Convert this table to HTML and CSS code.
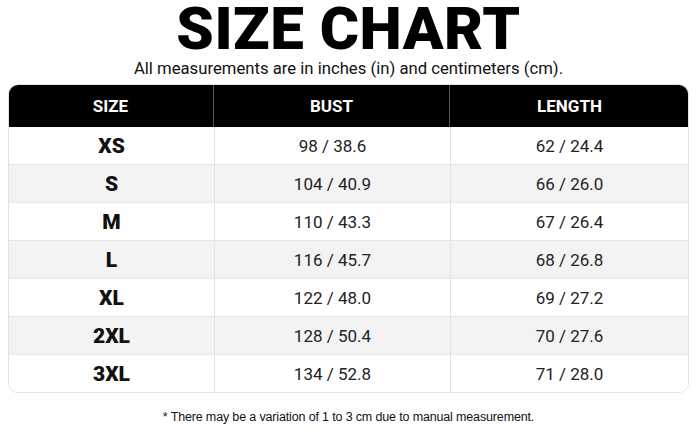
FILE: index.html
```html
<!DOCTYPE html>
<html lang="en">
<head>
<meta charset="utf-8">
<title>Size Chart</title>
<link rel="stylesheet" href="styles.css">
</head>
<body>
<main class="page">
  <h1 class="title">SIZE CHART</h1>
  <p class="subtitle">All measurements are in inches (in) and centimeters (cm).</p>
  <div class="chart">
    <div class="row head">
      <div class="cell">SIZE</div>
      <div class="cell">BUST</div>
      <div class="cell">LENGTH</div>
    </div>
    <div class="row">
      <div class="cell size">XS</div>
      <div class="cell">98 / 38.6</div>
      <div class="cell">62 / 24.4</div>
    </div>
    <div class="row alt">
      <div class="cell size">S</div>
      <div class="cell">104 / 40.9</div>
      <div class="cell">66 / 26.0</div>
    </div>
    <div class="row">
      <div class="cell size">M</div>
      <div class="cell">110 / 43.3</div>
      <div class="cell">67 / 26.4</div>
    </div>
    <div class="row alt">
      <div class="cell size">L</div>
      <div class="cell">116 / 45.7</div>
      <div class="cell">68 / 26.8</div>
    </div>
    <div class="row">
      <div class="cell size">XL</div>
      <div class="cell">122 / 48.0</div>
      <div class="cell">69 / 27.2</div>
    </div>
    <div class="row alt">
      <div class="cell size">2XL</div>
      <div class="cell">128 / 50.4</div>
      <div class="cell">70 / 27.6</div>
    </div>
    <div class="row last">
      <div class="cell size">3XL</div>
      <div class="cell">134 / 52.8</div>
      <div class="cell">71 / 28.0</div>
    </div>
  </div>
  <p class="note">* There may be a variation of 1 to 3 cm due to manual measurement.</p>
</main>
</body>
</html>
```

FILE: styles.css
```css
* { box-sizing: border-box; }
html, body { margin: 0; padding: 0; background: #ffffff; }
body {
  width: 700px;
  height: 436px;
  overflow: hidden;
  font-family: Roboto, "Liberation Sans", sans-serif;
  color: #111;
}
.page {
  display: flex;
  flex-direction: column;
  align-items: center;
  padding: 0 11px 0 8px;
}
.title {
  margin: 0;
  font-family: Roboto, sans-serif;
  font-weight: 900;
  font-size: 60px;
  line-height: 58px;
  letter-spacing: 0.5px;
  color: #000;
}
.subtitle {
  margin: 0;
  height: 26px;
  font-size: 16.7px;
  line-height: 22px;
  color: #111;
}
.chart {
  width: 681px;
  border: 1px solid #e2e2e2;
  border-radius: 10px;
  overflow: hidden;
  display: flex;
  flex-direction: column;
}
.row {
  display: grid;
  grid-template-columns: 206px 236px 1fr;
  height: 38px;
  background: #ffffff;
  border-bottom: 1px solid #e6e6e6;
}
.row.alt { background: #f3f3f3; }
.row.last { border-bottom: none; height: 37px; }
.row.head {
  height: 43px;
  background: #000;
  border-bottom: none;
  margin: -1px -1px 0;
}
.cell {
  display: flex;
  align-items: center;
  justify-content: center;
  font-size: 17px;
  color: #222;
  border-right: 1px solid #e3e3e3;
}
.cell:last-child { border-right: none; }
.head .cell {
  color: #fff;
  font-weight: 700;
  font-size: 17px;
  border-right: 1px solid #555;
}
.head .cell:last-child { border-right: none; }
.cell.size {
  font-weight: 900;
  font-size: 21px;
  color: #111;
}
.note {
  margin: 17px 0 0;
  font-family: "Liberation Sans", Arial, sans-serif;
  font-size: 12.5px;
  letter-spacing: -0.15px;
  color: #111;
}
```
